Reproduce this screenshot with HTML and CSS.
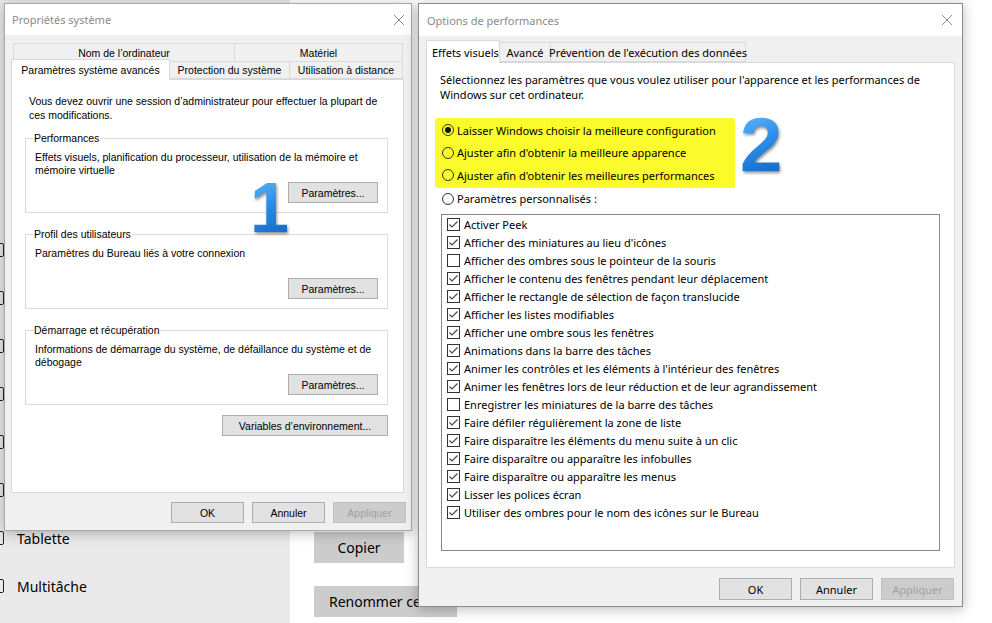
FILE: index.html
```html
<!DOCTYPE html>
<html lang="fr">
<head>
  <meta charset="UTF-8">
  <title>Options de performances</title>
  <link rel="stylesheet" href="styles.css">
</head>
<body>
<div class="desktop">

  <!-- Paramètres > Système (fond) -->
  <div class="settings">
    <nav class="settings-nav">
      <div class="nav-item"><span class="nav-icon"></span></div>
      <div class="nav-item"><span class="nav-icon"></span></div>
      <div class="nav-item"><span class="nav-icon"></span></div>
      <div class="nav-item"><span class="nav-icon"></span></div>
      <div class="nav-item"><span class="nav-icon"></span></div>
      <div class="nav-item"><span class="nav-icon"></span></div>
      <div class="nav-item"><span class="nav-icon"></span>Tablette</div>
      <div class="nav-item"><span class="nav-icon"></span>Multitâche</div>
    </nav>
    <main class="settings-main">
      <button class="flat-btn flat-copy">Copier</button>
      <button class="flat-btn flat-rename">Renommer ce PC</button>
    </main>
  </div>

  <!-- Propriétés système -->
  <section class="window sysprops">
    <header class="titlebar">
      <span class="title">Propriétés système</span>
      <svg class="close" viewBox="0 0 10 10"><path d="M0 0L10 10M10 0L0 10"/></svg>
    </header>
    <div class="window-body">
      <div class="tabstrip">
        <div class="tabrow tabrow-back">
          <div class="tab tab-name">Nom de l’ordinateur</div>
          <div class="tab tab-fill">Matériel</div>
        </div>
        <div class="tabrow">
          <div class="tab tab-active tab-adv">Paramètres système avancés</div>
          <div class="tab tab-prot">Protection du système</div>
          <div class="tab tab-fill">Utilisation à distance</div>
        </div>
      </div>
      <div class="tabpanel sys-panel">
        <p class="intro">Vous devez ouvrir une session d’administrateur pour effectuer la plupart de ces modifications.</p>

        <fieldset class="group">
          <legend>Performances</legend>
          <p class="group-text">Effets visuels, planification du processeur, utilisation de la mémoire et mémoire virtuelle</p>
          <div class="group-actions"><button class="btn btn-params">Paramètres...</button></div>
        </fieldset>

        <fieldset class="group">
          <legend>Profil des utilisateurs</legend>
          <p class="group-text">Paramètres du Bureau liés à votre connexion</p>
          <div class="group-actions"><button class="btn btn-params">Paramètres...</button></div>
        </fieldset>

        <fieldset class="group">
          <legend>Démarrage et récupération</legend>
          <p class="group-text">Informations de démarrage du système, de défaillance du système et de débogage</p>
          <div class="group-actions"><button class="btn btn-params">Paramètres...</button></div>
        </fieldset>

        <div class="env-row"><button class="btn btn-env">Variables d’environnement...</button></div>
      </div>
      <div class="dialog-buttons">
        <button class="btn">OK</button>
        <button class="btn">Annuler</button>
        <button class="btn" disabled>Appliquer</button>
      </div>
    </div>
  </section>

  <!-- Options de performances -->
  <section class="window perfopts">
    <header class="titlebar">
      <span class="title">Options de performances</span>
      <svg class="close" viewBox="0 0 10 10"><path d="M0 0L10 10M10 0L0 10"/></svg>
    </header>
    <div class="window-body">
      <div class="tabrow tabrow-single">
        <div class="tab tab-active tab-visual">Effets visuels</div>
        <div class="tab tab-advanced">Avancé</div>
        <div class="tab tab-dep">Prévention de l'exécution des données</div>
      </div>
      <div class="tabpanel perf-panel">
        <p class="intro">Sélectionnez les paramètres que vous voulez utiliser pour l'apparence et les performances de Windows sur cet ordinateur.</p>

        <div class="highlight">
          <div class="radio-row"><span class="radio on"></span>Laisser Windows choisir la meilleure configuration</div>
          <div class="radio-row"><span class="radio"></span>Ajuster afin d'obtenir la meilleure apparence</div>
          <div class="radio-row"><span class="radio"></span>Ajuster afin d'obtenir les meilleures performances</div>
        </div>
        <div class="radio-row radio-custom"><span class="radio"></span>Paramètres personnalisés :</div>

        <ul class="checklist">
          <li><span class="check on"><svg viewBox="0 0 11 11"><polyline points="1.5,5.5 4,8 9.5,2.5"/></svg></span>Activer Peek</li>
          <li><span class="check on"><svg viewBox="0 0 11 11"><polyline points="1.5,5.5 4,8 9.5,2.5"/></svg></span>Afficher des miniatures au lieu d'icônes</li>
          <li><span class="check"></span>Afficher des ombres sous le pointeur de la souris</li>
          <li><span class="check on"><svg viewBox="0 0 11 11"><polyline points="1.5,5.5 4,8 9.5,2.5"/></svg></span>Afficher le contenu des fenêtres pendant leur déplacement</li>
          <li><span class="check on"><svg viewBox="0 0 11 11"><polyline points="1.5,5.5 4,8 9.5,2.5"/></svg></span>Afficher le rectangle de sélection de façon translucide</li>
          <li><span class="check on"><svg viewBox="0 0 11 11"><polyline points="1.5,5.5 4,8 9.5,2.5"/></svg></span>Afficher les listes modifiables</li>
          <li><span class="check on"><svg viewBox="0 0 11 11"><polyline points="1.5,5.5 4,8 9.5,2.5"/></svg></span>Afficher une ombre sous les fenêtres</li>
          <li><span class="check on"><svg viewBox="0 0 11 11"><polyline points="1.5,5.5 4,8 9.5,2.5"/></svg></span>Animations dans la barre des tâches</li>
          <li><span class="check on"><svg viewBox="0 0 11 11"><polyline points="1.5,5.5 4,8 9.5,2.5"/></svg></span>Animer les contrôles et les éléments à l'intérieur des fenêtres</li>
          <li><span class="check on"><svg viewBox="0 0 11 11"><polyline points="1.5,5.5 4,8 9.5,2.5"/></svg></span>Animer les fenêtres lors de leur réduction et de leur agrandissement</li>
          <li><span class="check"></span>Enregistrer les miniatures de la barre des tâches</li>
          <li><span class="check on"><svg viewBox="0 0 11 11"><polyline points="1.5,5.5 4,8 9.5,2.5"/></svg></span>Faire défiler régulièrement la zone de liste</li>
          <li><span class="check on"><svg viewBox="0 0 11 11"><polyline points="1.5,5.5 4,8 9.5,2.5"/></svg></span>Faire disparaître les éléments du menu suite à un clic</li>
          <li><span class="check on"><svg viewBox="0 0 11 11"><polyline points="1.5,5.5 4,8 9.5,2.5"/></svg></span>Faire disparaître ou apparaître les infobulles</li>
          <li><span class="check on"><svg viewBox="0 0 11 11"><polyline points="1.5,5.5 4,8 9.5,2.5"/></svg></span>Faire disparaître ou apparaître les menus</li>
          <li><span class="check on"><svg viewBox="0 0 11 11"><polyline points="1.5,5.5 4,8 9.5,2.5"/></svg></span>Lisser les polices écran</li>
          <li><span class="check on"><svg viewBox="0 0 11 11"><polyline points="1.5,5.5 4,8 9.5,2.5"/></svg></span>Utiliser des ombres pour le nom des icônes sur le Bureau</li>
        </ul>
      </div>
      <div class="dialog-buttons">
        <button class="btn">OK</button>
        <button class="btn">Annuler</button>
        <button class="btn" disabled>Appliquer</button>
      </div>
    </div>
  </section>

  <!-- repères numérotés -->
  <span class="marker marker-1">1</span>
  <span class="marker marker-2">2</span>
</div>
</body>
</html>
```

FILE: styles.css
```css
* {
  box-sizing: border-box;
}
html, body {
  margin: 0;
}
body {
  width: 992px;
  height: 623px;
  overflow: hidden;
  background: #fff;
  font-family: "Noto Sans", sans-serif;
  color: #000;
}
.desktop {
  position: relative;
  width: 992px;
  height: 623px;
  overflow: hidden;
}

/* page Paramètres */
.settings {
  display: flex;
  height: 100%;
}
.settings-nav {
  width: 290px;
  flex-shrink: 0;
  background: #e9e9e9;
  display: flex;
  flex-direction: column;
  justify-content: flex-end;
  padding-bottom: 13px;
}
.nav-item {
  position: relative;
  height: 48px;
  display: flex;
  align-items: center;
  padding-left: 17px;
  font-size: 14px;
  white-space: nowrap;
}
.nav-icon {
  position: absolute;
  left: -10px;
  top: 17px;
  width: 14px;
  height: 14px;
  border: 1px solid #222;
  border-radius: 2px;
}
.settings-main {
  flex: 1;
  display: flex;
  flex-direction: column;
  align-items: flex-start;
  padding: 0 0 6px 24px;
}
.flat-btn {
  height: 31px;
  border: 0;
  background: #cccccc;
  font-family: "Noto Sans", sans-serif;
  font-size: 14px;
  padding: 0 15px;
  white-space: nowrap;
}
.flat-copy {
  margin-top: auto;
  width: 90px;
  padding: 0;
}
.flat-rename {
  margin-top: 23px;
}

/* fenêtres */
.window {
  position: absolute;
  display: flex;
  flex-direction: column;
  background: #f0f0f0;
  box-shadow: 0 2px 12px rgba(0, 0, 0, 0.28);
}
.titlebar {
  display: flex;
  align-items: center;
  justify-content: space-between;
  background: #fff;
  font-family: "Noto Sans", sans-serif;
  font-size: 11px;
  color: #8a8a8a;
}
.close {
  width: 10px;
  height: 10px;
  stroke: #8a8a8a;
  stroke-width: 1;
}
.window-body {
  flex: 1;
  display: flex;
  flex-direction: column;
}
.tabrow {
  display: flex;
}
.tab {
  border: 1px solid #d9d9d9;
  background: #f0f0f0;
  display: flex;
  align-items: center;
  justify-content: center;
  white-space: nowrap;
}
.tab + .tab {
  border-left: 0;
}
.tab-active {
  position: relative;
  z-index: 2;
  background: #fff;
  border-bottom: 0;
}
.tab-fill {
  flex: 1;
}
.tabpanel {
  flex: 1;
  background: #fff;
  border: 1px solid #d9d9d9;
}
.intro {
  margin: 0;
}
.btn {
  font: inherit;
  letter-spacing: inherit;
  color: #000;
  background: #e1e1e1;
  border: 1px solid #adadad;
  padding: 0;
  width: 73px;
}
.btn:disabled {
  background: #cccccc;
  border-color: #bfbfbf;
  color: #a0a0a0;
}
.dialog-buttons {
  display: flex;
  justify-content: flex-end;
  gap: 8px;
}

/* Propriétés système */
.sysprops {
  left: 4px;
  top: 3px;
  width: 408px;
  height: 528px;
  border: 1px solid #a8a8a8;
  font-family: "Liberation Sans", Arial, sans-serif;
  font-size: 10.5px;
}
.sysprops .titlebar {
  height: 31px;
  padding: 0 7px 0 7px;
}
.sysprops .window-body {
  padding: 8px 7px 7px 6px;
}
.sysprops .tabstrip {
  margin: 0 1px 0 2px;
}
.sysprops .tabrow {
  height: 18px;
}
.tabrow-back .tab {
  border-bottom: 0;
}
.tab-name {
  width: 222px;
}
.tab-adv {
  width: 159px;
  height: 21px;
  margin: -2px 0 0 -2px;
}
.tab-prot {
  width: 120px;
}
.sys-panel {
  padding: 14px 15px 0 13px;
}
.sys-panel .intro {
  margin-left: 4px;
  line-height: 14px;
}
.group {
  margin: 9px 0 0;
  padding: 0 9px 9px 9px;
  border: 1px solid #dcdcdc;
  min-inline-size: 0;
}
.group + .group {
  margin-top: 14px;
}
.group legend {
  padding: 0 1px;
  margin-left: -2px;
  line-height: 14px;
}
.group-text {
  margin: 6px 0 0;
  line-height: 13px;
  min-height: 26px;
}
.group-actions {
  display: flex;
  justify-content: flex-end;
  margin-top: 5px;
}
.btn-params {
  width: 90px;
  height: 21px;
}
.env-row {
  display: flex;
  justify-content: flex-end;
  margin-top: 10px;
}
.btn-env {
  width: 166px;
  height: 21px;
}
.sysprops .dialog-buttons {
  margin: 9px -2px 0 0;
}
.sysprops .dialog-buttons .btn {
  height: 21px;
}

/* Options de performances */
.perfopts {
  left: 418px;
  top: 3px;
  width: 545px;
  height: 604px;
  border: 1px solid #8c8c8c;
  font-size: 11px;
}
.perfopts .titlebar {
  height: 32px;
  padding: 0 10px 0 8px;
}
.perfopts .window-body {
  padding: 6px 7px 6px 7px;
}
.tabrow-single {
  height: 20px;
}
.tab-visual {
  width: 74px;
  height: 23px;
  margin-top: -2px;
  justify-content: flex-start;
  padding-left: 5px;
}
.tab-advanced {
  width: 51px;
}
.tab-dep {
  width: 195px;
}
.perf-panel {
  padding: 9px 14px 0 8px;
}
.perf-panel .intro {
  margin-left: 5px;
  line-height: 15px;
}
.highlight {
  width: 300px;
  margin-top: 16px;
  padding: 1px 0;
  background: #fbfb2c;
  border-radius: 2px;
}
.radio-row {
  height: 22.5px;
  display: flex;
  align-items: center;
  padding-left: 7px;
  white-space: nowrap;
}
.radio {
  width: 12px;
  height: 12px;
  margin-right: 3px;
  border: 1px solid #333;
  border-radius: 50%;
  display: flex;
  align-items: center;
  justify-content: center;
}
.radio.on::after {
  content: "";
  width: 6px;
  height: 6px;
  border-radius: 50%;
  background: #111;
}
.checklist {
  list-style: none;
  margin: 4px 0 0 6px;
  padding: 0 0 0 5px;
  width: 499px;
  height: 337px;
  border: 1px solid #828790;
}
.checklist li {
  height: 18px;
  display: flex;
  align-items: center;
  white-space: nowrap;
}
.check {
  width: 13px;
  height: 13px;
  margin-right: 4px;
  border: 1px solid #333;
  background: #fff;
  display: flex;
}
.check svg {
  width: 11px;
  height: 11px;
  fill: none;
  stroke: #444;
  stroke-width: 1.1;
}
.perfopts .dialog-buttons {
  margin: 10px 1px 0 0;
}
.perfopts .dialog-buttons .btn {
  height: 22px;
}

/* repères bleus */
.marker {
  position: absolute;
  font-family: "Liberation Sans", Arial, sans-serif;
  font-weight: 700;
  background: linear-gradient(160deg, #6cc0ff 0%, #2a8ee8 45%, #115fbf 100%);
  -webkit-background-clip: text;
  background-clip: text;
  color: transparent;
  filter: drop-shadow(1px 2px 1.5px rgba(0, 0, 0, 0.45));
}
.marker-1 {
  left: 250px;
  top: 172px;
  font-size: 70px;
  line-height: 72px;
}
.marker-2 {
  left: 740px;
  top: 107px;
  font-size: 76px;
  line-height: 76px;
}
```
